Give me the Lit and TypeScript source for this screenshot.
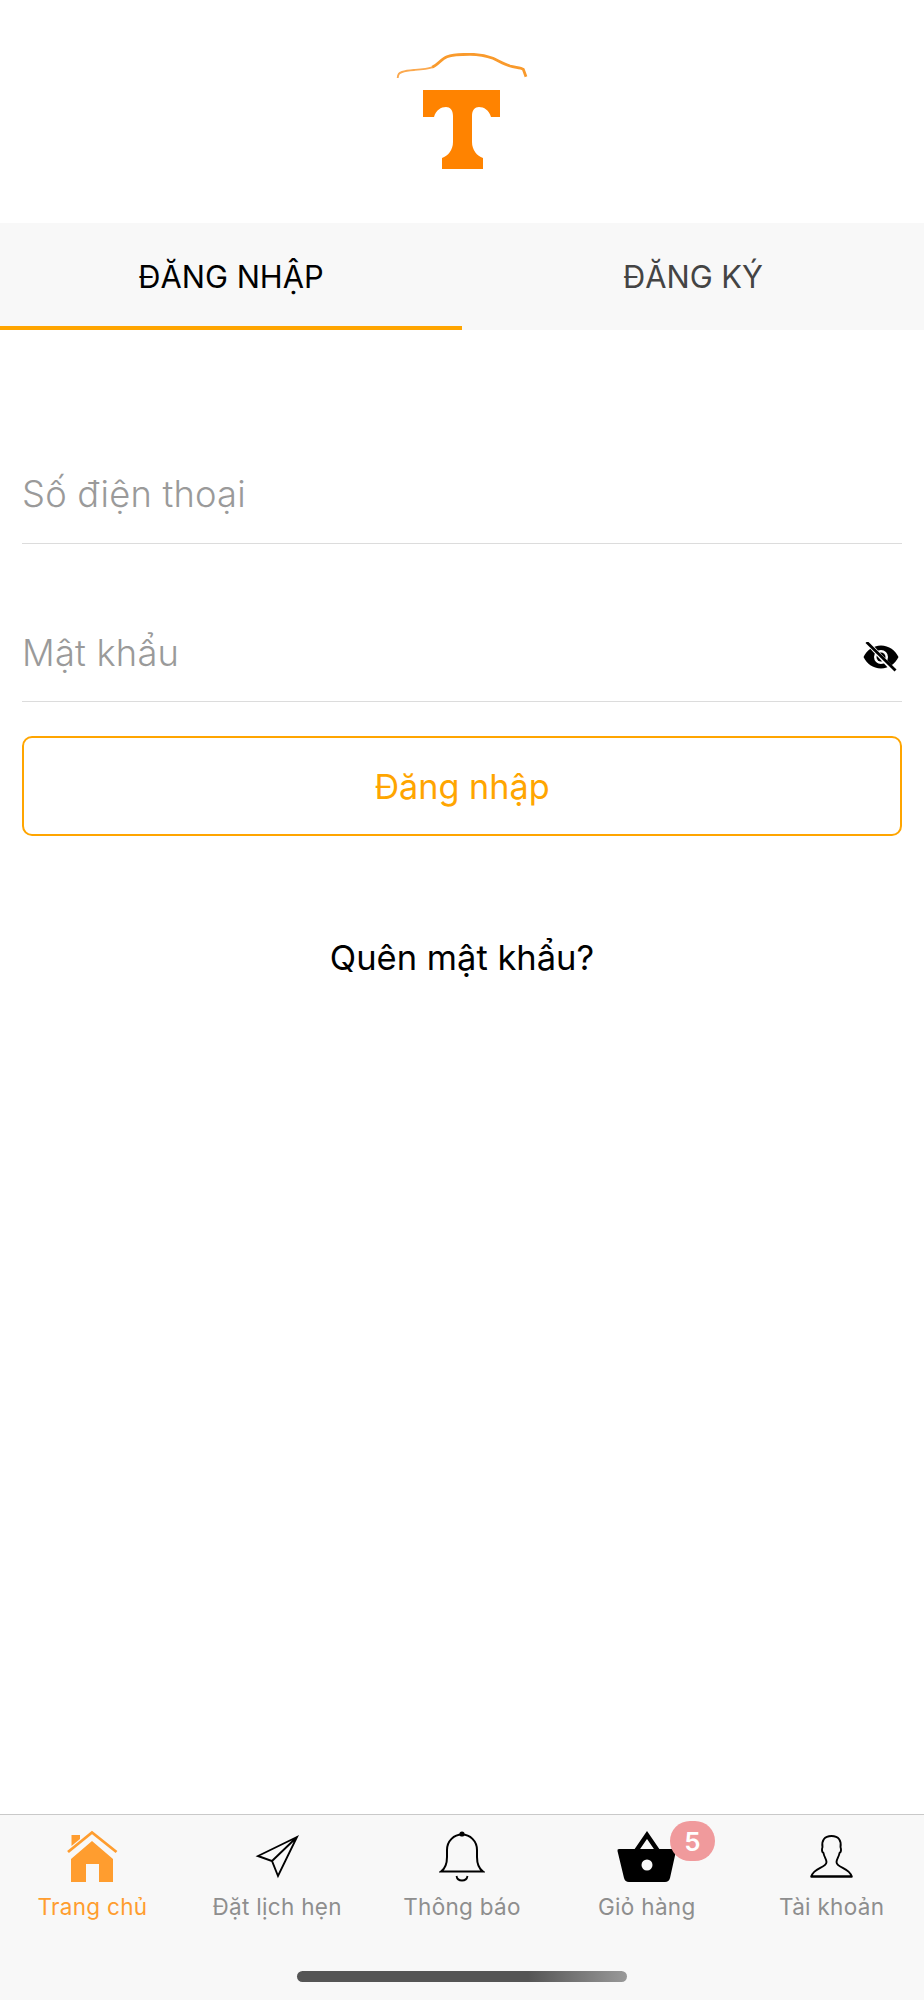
import { LitElement, html, css, svg } from "lit";
import { customElement } from "lit/decorators.js";

const home = svg`<svg width="52" height="52" viewBox="0 0 52 52"><path fill="#ff9d2f" d="M26 11 L47 29 V52 H33 V34 H20 V52 H5 V29 Z"/><path fill="#ff9d2f" d="M5.500 5 H14 V9 L5.500 16 Z"/><path fill="none" stroke="#ff9d2f" stroke-width="2.800" d="M2 22 L26 2.500 L50.500 22"/></svg>`;
const plane = svg`<svg width="44" height="52" viewBox="0 0 44 52"><path fill="none" stroke="#000" stroke-width="1.900" d="M42 7 L3 26 L17 31 L23 46 Z M42 7 L17 31"/></svg>`;
const bell = svg`<svg width="46" height="52" viewBox="0 0 46 52"><circle cx="23" cy="4" r="2.600" fill="#000"/><path fill="none" stroke="#000" stroke-width="2" d="M2 41.500 H44 C39 38 38 33 38 27 V20 C38 11 31 4.500 23 4.500 C15 4.500 8 11 8 20 V27 C8 33 7 38 2 41.500 Z"/><path fill="none" stroke="#000" stroke-width="1.800" d="M17.500 46 C18.500 52 27.500 52 28.500 46"/></svg>`;
const basket = svg`<svg width="60" height="52" viewBox="0 0 60 52"><path fill="#000" d="M2 19 H57 Q59.500 19 59 21 L53 48 Q52 52 48 52 H12 Q8 52 7 48 L0.500 21 Q0 19 2 19 Z"/><path fill="none" stroke="#000" stroke-width="4.500" d="M19 21 L30 5 L41 21"/><circle cx="30" cy="35" r="5.500" fill="#f8f8f8"/></svg>`;
const person = svg`<svg width="44" height="52" viewBox="0 0 44 52"><path fill="none" stroke="#000" stroke-width="1.900" stroke-linejoin="round" d="M21.500 6 C14 6 11.500 11 12.500 17 C11.500 20 12 22 13.500 23 C14 27 16.500 29 16.500 32 C16.500 38 3 38 1.500 46.500 H41.500 C40 38 26.500 38 26.500 32 C26.500 29 29 27 29.500 23 C31 22 31.500 20 30.500 17 C31.500 11 29 6 21.500 6 Z"/><path stroke="#000" stroke-width="2.200" d="M0.500 46.500 H42.500"/></svg>`;
const eye = svg`<svg width="36" height="30" viewBox="0 0 36 30"><path fill="#000" fill-rule="evenodd" d="M18 3.500 C26 3.500 32.500 8.500 35.500 15 C32.500 21.500 26 26.500 18 26.500 C10 26.500 3.500 21.500 0.500 15 C3.500 8.500 10 3.500 18 3.500 Z M18 8 A7 7 0 1 0 18 22 A7 7 0 1 0 18 8 Z"/><circle cx="18" cy="15" r="4.500" fill="#000"/><path stroke="#fff" stroke-width="4.500" d="M4 0 L32 30"/><path stroke="#000" stroke-width="2.800" d="M3.500 0 L32.500 28.500"/></svg>`;
const logo = svg`<svg width="132" height="120" viewBox="0 0 132 120"><path fill="none" stroke="#fba94f" stroke-width="1.900" d="M1.700 25 C2 21 3 20 6 19 C9 18 12 17.500 18 17 C24 16.500 31 16 36 14.300"/><path fill="none" stroke="#f99a2c" stroke-width="2.800" d="M36 14.300 C42 12 45 6 51 3.700 C57 1.500 66 1.300 74 1.300 C83 1.300 91 3 97 5.300 C103 8 108 11 114 13 C119 14.500 125 14.500 127.300 16.300 L130 23.700"/><path fill="#ff8300" d="M27 37 H104 V64 H95 C93 57 88 54 83 54 C79 54 76 57 76 63 V89 C76 97 81 103 87 105 V116 H46 V105 C52 103 57 97 57 89 V63 C57 57 54 54 50 54 C45 54 40 57 38 64 H27 Z"/></svg>`;

const tabs: [string, unknown, boolean][] = [
  ["Trang chủ", home, true],
  ["Đặt lịch hẹn", plane, false],
  ["Thông báo", bell, false],
  ["Giỏ hàng", basket, false],
  ["Tài khoản", person, false],
];

@customElement("app-root")
export class AppRoot extends LitElement {
  static styles = css`
    :host { display: block; width: 924px; height: 2000px; font-family: Inter, "Noto Sans", sans-serif; background: #fff; }
    .page { height: 2000px; display: flex; flex-direction: column; }
    .brand { height: 223px; display: flex; justify-content: center; padding-top: 53px; box-sizing: border-box; }
    .seg { height: 107px; display: grid; grid-template-columns: 1fr 1fr; background: #f8f8f8; }
    .seg div { display: flex; align-items: center; justify-content: center; font-size: 30.800px; color: #444; padding-top: 2px; padding-bottom: 2px; box-sizing: border-box; }
    .seg .on { color: #000; border-bottom: 4px solid #ffa500; padding-bottom: 0; padding-top: 3px; }
    .form { flex: 1; padding: 55px 22px 0; display: flex; flex-direction: column; }
    .field { height: 96px; border-bottom: 1.500px solid #dcdcdc; box-sizing: border-box; display: flex; align-items: center; justify-content: space-between; font-size: 36.300px; font-weight: 300; letter-spacing: 0.2px; color: #9a9a9a; margin-top: 63px; padding-bottom: 3px; }
    .field + .field { margin-top: 62px; padding-bottom: 2px; }
    .btn { margin-top: 34px; height: 100px; box-sizing: border-box; border: 2.500px solid #ffa500; border-radius: 10px; display: flex; align-items: center; justify-content: center; color: #ffa500; font-size: 34.200px; font-weight: 400; }
    .forgot { margin-top: 101px; text-align: center; font-size: 34.500px; color: #000; font-weight: 400; }
    .eye { display: flex; margin-right: 3px; margin-top: 8px; }
    .bar { height: 186px; box-sizing: border-box; background: #f8f8f8; border-top: 1.500px solid #c9c9c9; display: flex; flex-direction: column; }
    .items { display: grid; grid-template-columns: repeat(5, 1fr); }
    .item { position: relative; display: flex; flex-direction: column; align-items: center; font-size: 22.500px; line-height: 27px; color: #8e8e8e; letter-spacing: 0.3px; }
    .item.on { color: #ff9d2f; }
    .iconbox { height: 67px; display: flex; align-items: flex-end; justify-content: center; margin-bottom: 11px; }
    .badge { position: absolute; left: 115.500px; top: 6px; width: 45px; height: 40px; border-radius: 20px; background: #f09a9c; color: #fff; font-size: 26px; font-weight: 600; display: flex; align-items: center; justify-content: center; letter-spacing: 0; }
    .homebar { align-self: center; margin-top: 51px; width: 330px; height: 11px; border-radius: 6px; background: linear-gradient(90deg, #555, #555 70%, #999); }
  `;

  render() {
    return html`<div class="page">
      <div class="brand">${logo}</div>
      <div class="seg"><div class="on">ĐĂNG NHẬP</div><div>ĐĂNG KÝ</div></div>
      <div class="form">
        <div class="field">Số điện thoại</div>
        <div class="field">Mật khẩu<span class="eye">${eye}</span></div>
        <div class="btn">Đăng nhập</div>
        <div class="forgot">Quên mật khẩu?</div>
      </div>
      <div class="bar">
        <div class="items">
          ${tabs.map(([label, icon, on], i) => html`<div class="item ${on ? "on" : ""}">
            <div class="iconbox">${icon}</div>
            <span>${label}</span>
            ${i === 3 ? html`<span class="badge">5</span>` : ""}
          </div>`)}
        </div>
        <div class="homebar"></div>
      </div>
    </div>`;
  }
}
